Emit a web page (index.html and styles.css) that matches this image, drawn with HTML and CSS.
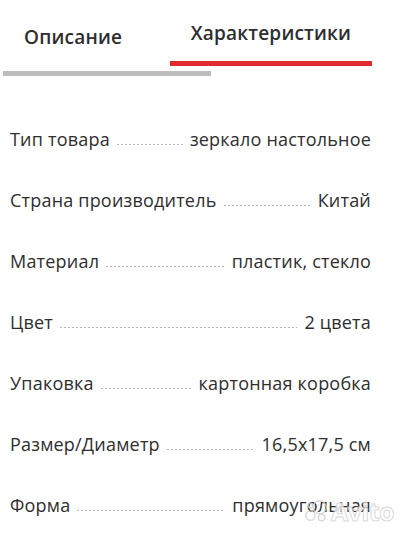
FILE: index.html
```html
<!DOCTYPE html>
<html lang="ru">
<head>
<meta charset="utf-8">
<link rel="stylesheet" href="styles.css">
</head>
<body>
<div class="tabs">
  <div class="tab tab-desc">Описание</div>
  <div class="tab tab-active">Характеристики</div>
</div>
<div class="scroll"></div>
<div class="specs">
  <div class="row"><span class="label">Тип товара</span><span class="leader"></span><span class="value">зеркало настольное</span></div>
  <div class="row"><span class="label">Страна производитель</span><span class="leader"></span><span class="value">Китай</span></div>
  <div class="row"><span class="label">Материал</span><span class="leader"></span><span class="value">пластик, стекло</span></div>
  <div class="row"><span class="label">Цвет</span><span class="leader"></span><span class="value">2 цвета</span></div>
  <div class="row"><span class="label">Упаковка</span><span class="leader"></span><span class="value">картонная коробка</span></div>
  <div class="row"><span class="label">Размер/Диаметр</span><span class="leader"></span><span class="value">16,5x17,5 см</span></div>
  <div class="row"><span class="label">Форма</span><span class="leader"></span><span class="value">прямоугольная</span></div>
</div>
<div class="watermark">
  <svg class="wm-logo" width="26" height="26" viewBox="0 0 28 28">
    <circle cx="18" cy="10" r="7" fill="none" stroke="#d0d0d0" stroke-width="1.5"/>
    <circle cx="8" cy="19" r="5" fill="none" stroke="#d0d0d0" stroke-width="1.5"/>
    <circle cx="20" cy="21" r="3.5" fill="none" stroke="#d0d0d0" stroke-width="1.5"/>
    <circle cx="8" cy="8" r="2.5" fill="none" stroke="#d0d0d0" stroke-width="1.5"/>
  </svg>
  <span class="wm-text">Avito</span>
</div>
</body>
</html>
```

FILE: styles.css
```css
html, body {
  margin: 0;
  padding: 0;
  background: #ffffff;
}
body {
  width: 404px;
  height: 540px;
  overflow: hidden;
  position: relative;
  font-family: "Open Sans", Lato, sans-serif;
  color: #2e2e2e;
}
.tabs {
  display: flex;
  align-items: flex-start;
  height: 66px;
}
.tab {
  font-size: 19px;
  font-weight: 600;
  letter-spacing: 0.2px;
  color: #2e2e2e;
  box-sizing: border-box;
  line-height: 24px;
}
.tab-desc {
  width: 170px;
  padding-left: 24px;
  padding-top: 25px;
}
.tab-active {
  width: 202px;
  height: 66px;
  padding-top: 21px;
  text-align: center;
  border-bottom: 5px solid #e02a2f;
}
.scroll {
  margin-left: 3px;
  margin-top: 5px;
  width: 208px;
  height: 5px;
  background: #bdbdbd;
}
.specs {
  margin-top: 32px;
  padding: 0 33px 0 10px;
}
.row {
  display: flex;
  align-items: center;
  height: 61px;
  font-size: 18px;
  letter-spacing: 0.2px;
  line-height: 22px;
  white-space: nowrap;
}
.leader {
  flex: 1;
  height: 1px;
  margin: 12px 7px 0 7px;
  background-image: repeating-linear-gradient(to right, #b8b8b8 0, #b8b8b8 2px, transparent 2px, transparent 4px);
}
.watermark {
  position: absolute;
  right: 10px;
  bottom: 12px;
  display: flex;
  align-items: center;
  gap: 2px;
  opacity: 0.8;
}
.wm-text {
  font-family: "Open Sans", sans-serif;
  font-size: 25px;
  font-weight: 700;
  color: #ffffff;
  -webkit-text-stroke: 1px #d2d2d2;
  letter-spacing: -0.5px;
}
```
